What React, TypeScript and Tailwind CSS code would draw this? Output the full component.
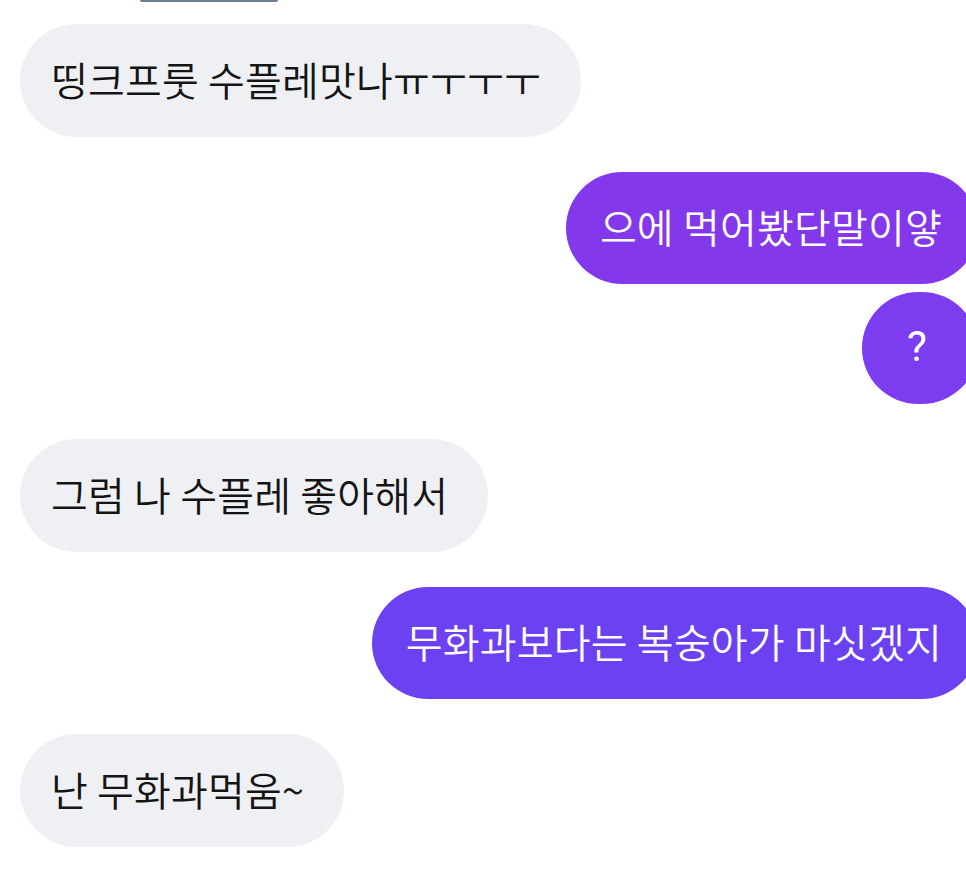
const font = {
  fontFamily: '"Noto Sans CJK KR", "Noto Sans", sans-serif',
};

type Msg = { text: string; mine: boolean; bg?: string; tight?: boolean };

const messages: Msg[] = [
  { text: "띵크프룻 수플레맛나ㅠㅜㅜㅜ", mine: false },
  { text: "으에 먹어봤단말이얗", mine: true, bg: "bg-[#8338ec]" },
  { text: "?", mine: true, bg: "bg-[#7c3cef]", tight: true },
  { text: "그럼 나 수플레 좋아해서", mine: false },
  { text: "무화과보다는 복숭아가 마싯겠지", mine: true, bg: "bg-[#6c41f1]" },
  { text: "난 무화과먹움~", mine: false },
];

function Bubble({ msg }: { msg: Msg }) {
  if (!msg.mine) {
    return (
      <div className="flex justify-start">
        <div className="h-[113px] flex items-center pl-[31px] pr-[40px] pb-[4px] rounded-full bg-[#eff0f4] text-[#141414] text-[40px] font-[350] leading-none tracking-[0.2px] whitespace-nowrap">
          {msg.text}
        </div>
      </div>
    );
  }
  if (msg.tight) {
    return (
      <div className="flex justify-end -mr-[12px]">
        <div
          className={`h-[112px] w-[116px] flex items-center justify-center pb-[2px] pr-[6px] rounded-full text-white text-[42px] font-normal leading-none font-['Roboto'] ${msg.bg}`}
        >
          {msg.text}
        </div>
      </div>
    );
  }
  return (
    <div className="flex justify-end -mr-[12px]">
      <div
        className={`h-[112px] flex items-center pb-[4px] pl-[34px] pr-[36px] rounded-full text-white text-[40px] font-[350] leading-none tracking-[0.2px] whitespace-nowrap ${msg.bg}`}
      >
        {msg.text}
      </div>
    </div>
  );
}

export default function App() {
  const groups: Msg[][] = [];
  messages.forEach((m, i) => {
    const prev = messages[i - 1];
    if (prev && prev.mine === m.mine) groups[groups.length - 1].push(m);
    else groups.push([m]);
  });

  return (
    <div className="w-[966px] h-[887px] bg-white overflow-hidden" style={font}>
      <div className="flex">
        <div className="ml-[140px] w-[138px] h-[2px] bg-[#6b7e98] rounded-b-full" />
      </div>
      <div className="flex flex-col gap-[35px] pt-[22px] pl-[20px]">
        {groups.map((g, i) => (
          <div key={i} className="flex flex-col gap-[8px]">
            {g.map((m, j) => (
              <Bubble key={j} msg={m} />
            ))}
          </div>
        ))}
      </div>
    </div>
  );
}
